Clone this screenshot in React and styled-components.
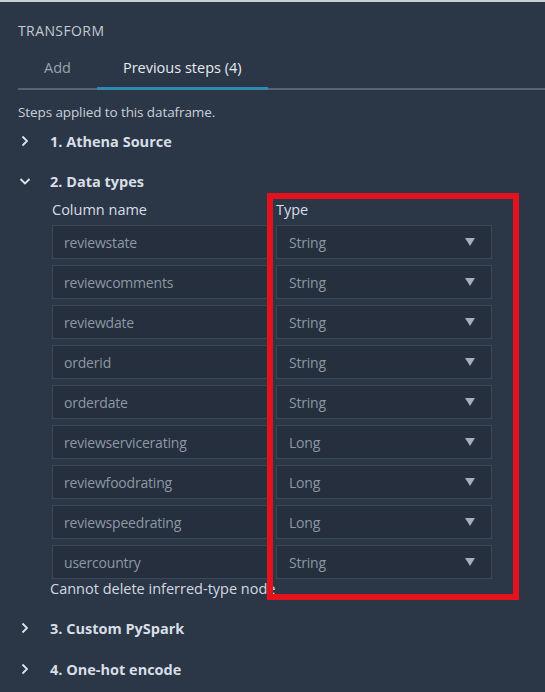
import React from 'react';
import styled, { createGlobalStyle } from 'styled-components';

const GlobalStyle = createGlobalStyle`
  html, body {
    margin: 0;
    padding: 0;
    background: #2b3647;
  }
  body {
    font-family: 'Open Sans', 'Noto Sans', sans-serif;
  }
`;

const Panel = styled.div`
  position: relative;
  width: 545px;
  height: 692px;
  box-sizing: border-box;
  border-top: 2px solid #c9ced6;
  background: #2b3647;
  color: #d5dbe2;
  overflow: hidden;
`;

const Title = styled.div`
  height: 18px;
  margin: 20px 0 0 18px;
  font-size: 14px;
  line-height: 18px;
  color: #c3cad3;
  letter-spacing: 0.4px;
`;

const Tabs = styled.div`
  display: flex;
  margin: 10px 0 0 18px;
  border-bottom: 2px solid #5a636f;
`;

const Tab = styled.div`
  position: relative;
  padding: 0 26px;
  height: 38px;
  line-height: 36px;
  font-size: 14.5px;
  color: ${({ active }) => (active ? '#e6ebf0' : '#9aa3ad')};

  &:after {
    content: '';
    display: ${({ active }) => (active ? 'block' : 'none')};
    position: absolute;
    left: 0;
    right: 0;
    bottom: -2px;
    height: 3px;
    background: #2f8bb0;
  }
`;

const Hint = styled.div`
  margin: 13px 0 0 18px;
  font-size: 13.5px;
  line-height: 18px;
  color: #c9d0d8;
  letter-spacing: -0.1px;
`;

const Step = styled.div`
  display: flex;
  align-items: center;
  height: 22px;
  margin: ${({ mt }) => mt}px 0 0 19px;
  font-size: 14.5px;
  font-weight: 700;
  color: #d8dee5;
`;

const Chevron = styled.svg`
  width: 12px;
  height: 12px;
  margin-right: 19px;
  flex-shrink: 0;
`;

const Grid = styled.div`
  display: grid;
  grid-template-columns: 218px 216px;
  column-gap: 6px;
  row-gap: 6px;
  margin: 7px 0 0 52px;
`;

const Header = styled.div`
  height: 22px;
  margin-bottom: -2px;
  font-size: 14.5px;
  line-height: 22px;
  color: #d8dee5;
`;

const Field = styled.div`
  display: flex;
  align-items: center;
  justify-content: space-between;
  height: 34px;
  box-sizing: border-box;
  padding: 0 16px 0 ${({ pl }) => pl}px;
  border: 1px solid #3c4655;
  background: #252f3d;
  font-size: 14px;
  letter-spacing: -0.2px;
  color: #8e98a4;
`;

const Arrow = styled.span`
  width: 0;
  height: 0;
  border-left: 5px solid transparent;
  border-right: 5px solid transparent;
  border-top: 8px solid #a7afb8;
`;

const Note = styled.div`
  margin: 0 0 0 50px;
  height: 20px;
  font-size: 14.5px;
  line-height: 20px;
  color: #d3d9e0;
  white-space: nowrap;
`;

const Highlight = styled.div`
  position: absolute;
  left: 267px;
  top: 191px;
  width: 252px;
  height: 407px;
  box-sizing: border-box;
  border: 6px solid #e3121d;
  pointer-events: none;
`;

const rows = [
  ['reviewstate', 'String'],
  ['reviewcomments', 'String'],
  ['reviewdate', 'String'],
  ['orderid', 'String'],
  ['orderdate', 'String'],
  ['reviewservicerating', 'Long'],
  ['reviewfoodrating', 'Long'],
  ['reviewspeedrating', 'Long'],
  ['usercountry', 'String'],
];

function Icon({ open }) {
  return (
    <Chevron viewBox="0 0 12 12">
      <polyline
        points={open ? '1.5,4 6,8.5 10.5,4' : '3.5,1.5 8,6 3.5,10.5'}
        fill="none"
        stroke="#dfe4ea"
        strokeWidth="1.8"
      />
    </Chevron>
  );
}

export default function App() {
  return (
    <>
      <GlobalStyle />
      <Panel>
        <Title>TRANSFORM</Title>
        <Tabs>
          <Tab>Add</Tab>
          <Tab active>Previous steps (4)</Tab>
        </Tabs>
        <Hint>Steps applied to this dataframe.</Hint>
        <Step mt={9}>
          <Icon />
          1. Athena Source
        </Step>
        <Step mt={18}>
          <Icon open />
          2. Data types
        </Step>
        <Grid>
          <Header>Column name</Header>
          <Header>Type</Header>
          {rows.map(([name, type]) => (
            <React.Fragment key={name}>
              <Field pl={11}>{name}</Field>
              <Field pl={12}>
                {type}
                <Arrow />
              </Field>
            </React.Fragment>
          ))}
        </Grid>
        <Note>Cannot delete inferred-type node</Note>
        <Step mt={18}>
          <Icon />
          3. Custom PySpark
        </Step>
        <Step mt={19}>
          <Icon />
          4. One-hot encode
        </Step>
        <Highlight />
      </Panel>
    </>
  );
}
